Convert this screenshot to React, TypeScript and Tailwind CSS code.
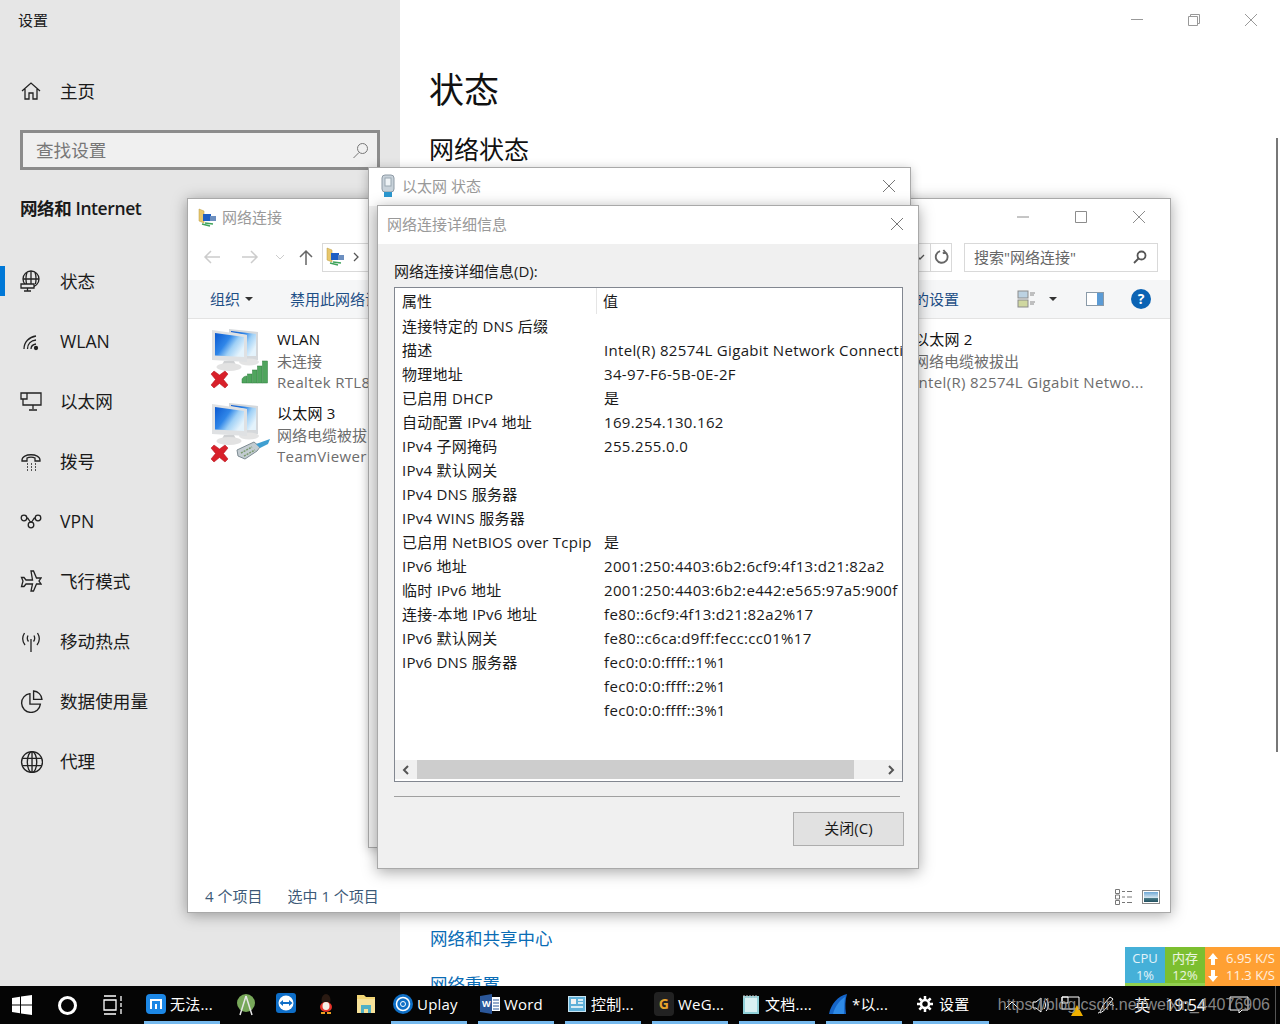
import { ReactNode } from "react"

const rows: [string, string][] = [
    ["连接特定的 DNS 后缀", ""],
    ["描述", "Intel(R) 82574L Gigabit Network Connection"],
    ["物理地址", "34-97-F6-5B-0E-2F"],
    ["已启用 DHCP", "是"],
    ["自动配置 IPv4 地址", "169.254.130.162"],
    ["IPv4 子网掩码", "255.255.0.0"],
    ["IPv4 默认网关", ""],
    ["IPv4 DNS 服务器", ""],
    ["IPv4 WINS 服务器", ""],
    ["已启用 NetBIOS over Tcpip", "是"],
    ["IPv6 地址", "2001:250:4403:6b2:6cf9:4f13:d21:82a2"],
    ["临时 IPv6 地址", "2001:250:4403:6b2:e442:e565:97a5:900f"],
    ["连接-本地 IPv6 地址", "fe80::6cf9:4f13:d21:82a2%17"],
    ["IPv6 默认网关", "fe80::c6ca:d9ff:fecc:cc01%17"],
    ["IPv6 DNS 服务器", "fec0:0:0:ffff::1%1"],
    ["", "fec0:0:0:ffff::2%1"],
    ["", "fec0:0:0:ffff::3%1"],
]

function Svg({ children, size = 22 }: { children: ReactNode; size?: number }) {
    return <svg width={size} height={size} viewBox="0 0 22 22" fill="none" stroke="#222" strokeWidth="1.3" className="shrink-0">{children}</svg>
}

const navItems: { label: string; icon: ReactNode }[] = [
    { label: "状态", icon: <Svg><circle cx="11" cy="9" r="8" /><path d="M3 9h16M11 1v13M7 2.500C6 5 6 11 6.500 14M15 2.500c1 2.500 1 8.500.5 11.500" /><path d="M1 14h13v4H1zM7.500 18v3M4 21h7" fill="#e6e6e6" /></Svg> },
    { label: "WLAN", icon: <Svg><path d="M4 19c0-7 5-12 12-13M7.500 19c0-5 3.500-8.500 8.500-9M11 19c0-2.500 2-4.500 5-5" /><circle cx="16" cy="18" r="1.500" fill="#222" /></Svg> },
    { label: "以太网", icon: <Svg><path d="M7 3h14v12H7M1 3h6v6H1zM3 9v6h4M13 15v4M9 20h8" /></Svg> },
    { label: "拨号", icon: <Svg><path d="M2 10c0-7 18-7 18 0v1h-5V8c-2-1-6-1-8 0v3H2z" /><path d="M7 14h1M11 14h1M15 14h1M7 17h1M11 17h1M15 17h1M7 20h1M11 20h1M15 20h1" /></Svg> },
    { label: "VPN", icon: <Svg><circle cx="4" cy="8" r="2.800" /><circle cx="18" cy="8" r="2.800" /><circle cx="11" cy="15" r="2.800" /><path d="M7 8c2 0 2 4 4 4s2-4 4-4" /></Svg> },
    { label: "飞行模式", icon: <Svg><path d="M11 1h2.500l3 7H21l-2 3 2 3h-4.500l-3 7H11l1.500-7H6l-2 2.500H1.500L3 11 1.500 7.500H4L6 10h6.500z" /></Svg> },
    { label: "移动热点", icon: <Svg><path d="M11 9v13M4.500 3C2 7 2 11 5 15M17.500 3c2.500 4 2.500 8-.5 12M8 5.500c-1 2-1 4 .5 6M14 5.500c1 2 1 4-.5 6" /></Svg> },
    { label: "数据使用量", icon: <Svg size={23}><path d="M9.500 3.500a9 9 0 1 0 10 10h-10z" /><path d="M13 1a8.500 8.500 0 0 1 8 8h-8z" /></Svg> },
    { label: "代理", icon: <Svg size={23}><circle cx="11.500" cy="11.500" r="10" /><ellipse cx="11.500" cy="11.500" rx="4.500" ry="10" /><path d="M2 8h19M2 15h19M11.500 1.500v20" /></Svg> },
]

function Sidebar() {
    return <div className="w-[400px] shrink-0 bg-[#e6e6e6] text-[#1a1a1a]">
        <div className="pl-[18px] pt-[10px] text-[15px] leading-[21px]">设置</div>
        <div className="flex items-center pl-5 mt-[44px] h-8 text-[17.6px]">
            <Svg><path d="M2 11 11 3l9 8M5 9v10h4v-6h4v6h4V9" /></Svg>
            <span className="ml-[18px]">主页</span>
        </div>
        <div className="mx-5 mt-[23px] h-10 border-[3px] border-[#8c8c8c] bg-[#f0f0f0] flex items-center justify-between pl-[13px] pr-2 text-[17.6px] text-[#777]">
            <span>查找设置</span>
            <svg width="17" height="17" viewBox="0 0 17 17" fill="none" stroke="#777"><circle cx="10.500" cy="6.500" r="5" /><path d="M7 10.500 1.500 16" /></svg>
        </div>
        <div className="pl-5 mt-[26px] text-[17.500px] leading-6 font-semibold tracking-[-0.4px]">网络和 Internet</div>
        <div className="mt-[31px]">
            {navItems.map((n, i) => (
                <div key={n.label} className="relative flex items-center h-[60px] pl-5">
                    {i === 0 && <div className="absolute left-0 top-[15px] w-[5px] h-[30px] bg-[#0078d7]" />}
                    <div className="w-[40px]">{n.icon}</div>
                    <span className="text-[17.6px]">{n.label}</span>
                </div>
            ))}
        </div>
    </div>
}

function MainPanel() {
    return <div className="relative flex-1 bg-white overflow-hidden pl-[30px]">
        <div className="absolute right-px top-0 flex text-[#999]">
            <div className="w-[57px] h-10 flex items-center justify-center"><svg width="12" height="12" stroke="currentColor"><path d="M0 5.500h12" /></svg></div>
            <div className="w-[57px] h-10 flex items-center justify-center"><svg width="12" height="12" fill="none" stroke="currentColor"><path d="M.5 2.500h9v9h-9zM2.500 2.500v-2h9v9h-2" /></svg></div>
            <div className="w-[57px] h-10 flex items-center justify-center"><svg width="12" height="12" stroke="currentColor"><path d="m0 0 12 12M12 0 0 12" /></svg></div>
        </div>
        <div className="absolute right-[2px] top-[138px] w-[2px] h-[614px] bg-[#777]" />
        <div className="pt-[66px] -ml-px text-[35px] leading-[48px] text-[#111]">状态</div>
        <div className="mt-[17px] text-[25px] leading-9 -ml-px text-[#111]">网络状态</div>
        <div className="mt-[757px] text-[17.5px] leading-7 text-[#0a6cb5]">网络和共享中心</div>
        <div className="mt-[18px] text-[17.5px] leading-7 text-[#0a6cb5]">网络重置</div>
    </div>
}

function NetIcon({ ethernet }: { ethernet?: boolean }) {
    return <svg width="62" height="62" viewBox="0 0 62 62" className="shrink-0">
        <defs>
            <linearGradient id="scr" x1="0" y1="0" x2="1" y2="0.6">
                <stop offset="0" stopColor="#0a58d0" />
                <stop offset="0.45" stopColor="#2f86e8" />
                <stop offset="0.7" stopColor="#9fd0f6" />
                <stop offset="1" stopColor="#e4f3fc" />
            </linearGradient>
        </defs>
        <path d="M19 0 48 3V31H36V6L19 4z" fill="#d5d8db" />
        <path d="M21 2 46 5V27H37V6L21 3z" fill="url(#scr)" />
        <ellipse cx="39" cy="33" rx="10" ry="3.500" fill="#e4e4e4" />
        <path d="M2 1 37 6V33L2 31z" fill="#dfe1e3" />
        <path d="M5 4 34 8V28L5 26.500z" fill="url(#scr)" />
        <path d="M14 32h10l2 4H12z" fill="#cfd1d3" />
        <ellipse cx="19" cy="38" rx="12.500" ry="4" fill="#e2e2e2" />
        <path d="M1 45 4 42l5.500 4L15 42l3 3-4.500 5.500L18 56l-3 3-5.500-4.500L4 59l-3-3 4.500-5.500z" fill="#d8202a" stroke="#b01018" strokeWidth="0.5" />
        {ethernet
            ? <g>
                <path d="M27 47 44 39l6 5-3 4-12 8-7-3z" fill="#c3ccd1" stroke="#7d8b92" />
                <path d="M31 50l11-6M34 53l11-6" stroke="#7b9a6f" strokeWidth="1.500" strokeDasharray="2 1" />
                <path d="M46 41 60 36l-2 5-8 4z" fill="#3f9fd1" />
            </g>
            : <g fill="#4fa55d" stroke="#2f7d3e" strokeWidth="0.5">
                <path d="M32 50c1-2 3-3 5-3v7h-5z" />
                <rect x="37.500" y="45" width="4.500" height="9" />
                <rect x="42.500" y="41" width="4.500" height="13" />
                <rect x="47.500" y="37" width="4.500" height="17" />
                <rect x="52.500" y="32" width="5" height="22" />
            </g>}
    </svg>
}

function ConnItem({ title, status, device, ethernet }: { title: string; status: string; device: string; ethernet?: boolean }) {
    return <div className="flex h-[74px] gap-[5px] overflow-hidden">
        <NetIcon ethernet={ethernet} />
        <div className="text-[15px] leading-[21px] whitespace-nowrap text-[#6d6d6d]">
            <div className="text-[#111] tracking-[0.2px]">{title}</div>
            <div className="mt-px">{status}</div>
            <div className="tracking-[0.35px]">{device}</div>
        </div>
    </div>
}

function NetworkWindow() {
    return <div className="absolute left-[187px] top-[198px] w-[984px] h-[715px] bg-white border border-[#a9a9a9] shadow-[0_2px_14px_rgba(0,0,0,0.35)] flex flex-col text-[#333]">
        <div className="h-[39px] shrink-0 flex items-center pl-[10px] pb-[2px]">
            <FolderNet />
            <span className="ml-[4px] text-[15px] text-[#999]">网络连接</span>
            <div className="ml-auto mr-[2px] -mt-[2px] flex text-[#8c8c8c]">
                <div className="w-[58px] flex justify-center"><svg width="14" height="14" stroke="currentColor"><path d="M1 7h12" /></svg></div>
                <div className="w-[58px] flex justify-center"><svg width="14" height="14" fill="none" stroke="currentColor"><path d="M1.500 1.500h11v11h-11z" /></svg></div>
                <div className="w-[58px] flex justify-center"><svg width="14" height="14" stroke="currentColor"><path d="m1 1 12 12M13 1 1 13" /></svg></div>
            </div>
        </div>
        <div className="h-[30px] shrink-0 mt-[4px] flex items-center pl-[15px] pr-[12px]">
            <svg width="18" height="14" fill="none" stroke="#ccc" strokeWidth="1.500"><path d="M17 7H2M8 1 2 7l6 6" /></svg>
            <svg width="18" height="14" fill="none" stroke="#ccc" strokeWidth="1.500" className="ml-[20px]"><path d="M1 7h15M10 1l6 6-6 6" /></svg>
            <svg width="10" height="6" fill="none" stroke="#ccc" className="ml-[16px]"><path d="m1 1 4 4 4-4" /></svg>
            <svg width="14" height="16" fill="none" stroke="#666" strokeWidth="1.500" className="ml-[14px]"><path d="M7 16V2M1 8l6-6 6 6" /></svg>
            <div className="ml-[9px] flex-1 h-[29px] border border-[#d9d9d9] flex items-center pl-[3px] pr-[5px]">
                <FolderNet />
                <svg width="8" height="10" fill="none" stroke="#555" strokeWidth="1.300" className="ml-[6px]"><path d="m2 1 4 4-4 4" /></svg>
                <svg width="10" height="6" fill="none" stroke="#555" strokeWidth="1.300" className="ml-auto"><path d="m1 1 4 4 4-4" /></svg>
            </div>
            <div className="h-[29px] w-[21px] border border-l-0 border-[#d9d9d9] flex items-center justify-center">
                <svg width="15" height="16" viewBox="0 0 16 16" fill="none" stroke="#666" strokeWidth="2"><path d="M11.500 2.500a6.300 6.300 0 1 1-5-.7M10 0.500l1.800 2.200-2.400 1.500" /></svg>
            </div>
            <div className="ml-[12px] w-[194px] h-[29px] border border-[#d9d9d9] flex items-center justify-between pl-[9px] pr-[10px] text-[15px] text-[#666]">
                <span>搜索"网络连接"</span>
                <svg width="14" height="14" viewBox="0 0 14 14" fill="none" stroke="#555" strokeWidth="1.800"><circle cx="8.500" cy="5.500" r="4" /><path d="M5.500 8.500 1 13" /></svg>
            </div>
        </div>
        <div className="h-[39px] shrink-0 mt-[8px] bg-[#f5f6f7] border-b border-[#e3e3e3] flex items-center justify-between pl-[22px] pr-[19px] text-[15px] text-[#1e4f86]">
            <div className="flex items-center whitespace-nowrap">
                <span>组织</span>
                <svg width="8" height="4" className="ml-[5px]"><path d="M0 0h8L4 4z" fill="#333" /></svg>
                <span className="ml-[37px]">禁用此网络设备</span>
            </div>
            <div className="flex items-center">
                <span>更改此连接的设置</span>
                <svg width="20" height="20" viewBox="0 0 20 20" className="ml-[58px]"><rect x="1" y="2" width="10" height="7" fill="#bcd2e2" stroke="#8b8b8b" /><rect x="1" y="11" width="10" height="7" fill="#cfd7a0" stroke="#8b8b8b" /><path d="M13 4h5M13 6h4M13 13h5M13 15h4" stroke="#888" /></svg>
                <svg width="8" height="4" className="ml-[12px]"><path d="M0 0h8L4 4z" fill="#333" /></svg>
                <svg width="18" height="14" className="ml-[29px]"><rect x=".5" y=".5" width="17" height="13" fill="#fff" stroke="#8a9aa8" /><rect x="11" y="1" width="6" height="12" fill="#5b9bd5" /></svg>
                <div className="ml-[27px] w-5 h-5 rounded-full bg-[#0b63b4] flex items-center justify-center text-white text-sm font-bold">?</div>
            </div>
        </div>
        <div className="flex-1 grid grid-cols-[637px_1fr] pl-[22px] pt-[10px] content-start">
            <div>
                <ConnItem title="WLAN" status="未连接" device="Realtek RTL8821CE Wireless LAN" />
                <ConnItem title="以太网 3" status="网络电缆被拔出" device="TeamViewer VPN Adapter" ethernet />
            </div>
            <ConnItem title="以太网 2" status="网络电缆被拔出" device="Intel(R) 82574L Gigabit Netwo..." ethernet />
        </div>
        <div className="h-[27px] mb-[2px] shrink-0 flex items-center pl-[17px] pr-[10px] text-[15px] text-[#3d5a78]">
            <span>4 个项目</span>
            <span className="ml-[25px]">选中 1 个项目</span>
            <svg width="20" height="18" className="ml-auto" fill="none" stroke="#777"><path d="M1.500 1.500h4v4h-4zM1.500 7h4v4h-4zM1.500 12.500h4v4h-4zM8 3.500h3M13 3.500h5M8 9h3M13 9h5M8 14.500h3M13 14.500h5" /></svg>
            <svg width="18" height="14" className="ml-[8px]">
                <defs><linearGradient id="pic" x1="0" y1="0" x2="0" y2="1"><stop offset="0" stopColor="#6fa8d6" /><stop offset="0.55" stopColor="#cfe2ee" /><stop offset="0.6" stopColor="#4e7f8c" /><stop offset="1" stopColor="#22505f" /></linearGradient></defs>
                <rect x=".5" y=".5" width="17" height="13" fill="#fff" stroke="#888" /><rect x="2" y="2" width="14" height="10" fill="url(#pic)" />
            </svg>
        </div>
    </div>
}

function FolderNet() {
    return <svg width="20" height="20" viewBox="0 0 20 20" className="shrink-0">
        <path d="M1 1l5 2v12L1 13z" fill="#e8c76d" stroke="#b99a3e" strokeWidth="0.5" />
        <rect x="5" y="6" width="8" height="7" fill="#1f5fc4" />
        <rect x="12" y="8" width="6" height="5" fill="#6c8fc0" />
        <path d="M4 16l8 2M7 15l8 1" stroke="#3fa45b" strokeWidth="1.500" />
    </svg>
}

function CloseX() {
    return <svg width="14" height="14" stroke="#777"><path d="m1 1 12 12M13 1 1 13" /></svg>
}

function StatusWindow() {
    return <div className="absolute left-[368px] top-[167px] w-[543px] h-[681px] bg-[#f0f0f0] border border-[#a9a9a9] shadow-[0_2px_10px_rgba(0,0,0,0.25)]">
        <div className="h-[38px] bg-white flex items-center pl-[11px] pr-[14px] pb-[2px]">
            <svg width="16" height="24" viewBox="0 0 16 24"><rect x="2" y="1" width="12" height="17" rx="3" fill="#c8d2da" stroke="#8d9aa5" /><rect x="5" y="4" width="6" height="8" fill="#eef3f6" stroke="#9aa8b2" /><rect x="4" y="18" width="8" height="5" fill="#2b97cf" /></svg>
            <span className="ml-[6px] text-[15px] text-[#999]">以太网 状态</span>
            <div className="ml-auto"><CloseX /></div>
        </div>
    </div>
}

function DetailsDialog() {
    return <div className="absolute left-[377px] top-[205px] w-[542px] h-[664px] bg-[#f0f0f0] border border-[#a9a9a9] shadow-[0_3px_14px_rgba(0,0,0,0.35)] flex flex-col text-[15px] text-[#1a1a1a]">
        <div className="h-[38px] shrink-0 bg-white flex items-center justify-between pl-[9px] pr-[14px] pb-[2px] text-[#999]">
            <span>网络连接详细信息</span>
            <CloseX />
        </div>
        <div className="pl-4 pt-[16px] leading-[22px]">网络连接详细信息(D):</div>
        <div className="ml-4 mt-[5px] w-[509px] h-[495px] shrink-0 bg-white border border-[#828790] flex flex-col overflow-hidden">
            <div className="h-[26px] shrink-0 flex items-center">
                <span className="w-[202px] shrink-0 pl-[7px] border-r border-[#e5e5e5] leading-[26px]">属性</span>
                <span className="pl-[6px]">值</span>
            </div>
            <div className="flex-1 overflow-hidden">
                {rows.map((r, i) => (
                    <div key={i} className="grid grid-cols-[202px_1fr] h-6 items-center whitespace-nowrap">
                        <span className="pl-[7px] tracking-[0.25px]">{r[0]}</span>
                        <span className="pl-[7px] overflow-hidden tracking-[0.33px]">{r[1]}</span>
                    </div>
                ))}
            </div>
            <div className="h-[19px] mb-[2px] shrink-0 flex items-center bg-[#f0f0f0]">
                <div className="w-[22px] flex justify-center"><svg width="8" height="10" fill="none" stroke="#555" strokeWidth="2"><path d="M6 1 2 5l4 4" /></svg></div>
                <div className="w-[437px] h-[19px] bg-[#cdcdcd]" />
                <div className="flex-1 flex justify-end pr-[7px]"><svg width="8" height="10" fill="none" stroke="#555" strokeWidth="2"><path d="m2 1 4 4-4 4" /></svg></div>
            </div>
        </div>
        <div className="ml-4 mr-[18px] mt-[14px] border-t border-[#a0a0a0]" />
        <div className="flex justify-end pr-[14px] mt-[15px]">
            <div className="w-[111px] h-[34px] pb-[2px] bg-[#e1e1e1] border border-[#adadad] flex items-center justify-center">关闭(C)</div>
        </div>
    </div>
}

function Uplay() {
    return <svg width="20" height="20" viewBox="0 0 20 20"><circle cx="10" cy="10" r="10" fill="#0f6fc6" /><circle cx="10" cy="10" r="6.500" fill="none" stroke="#fff" strokeWidth="1.500" /><circle cx="10" cy="10" r="2.500" fill="none" stroke="#fff" /></svg>
}

function TaskItem({ icon, label }: { icon: ReactNode; label: string }) {
    return <div className="w-[76px] h-[38px] shrink-0 border-b-[3px] border-[#76b9ed] flex items-center pl-[2px] gap-1 text-white text-[15px] tracking-[0.2px] whitespace-nowrap">
        <span className="w-5 h-5 shrink-0 flex items-center justify-center">{icon}</span>
        <span className="mt-[2px]">{label}</span>
    </div>
}

function Taskbar() {
    return <div className="relative h-[38px] shrink-0 bg-[#050505] flex items-center">
        <div className="w-[44px] flex justify-center">
            <svg width="20" height="20" viewBox="0 0 20 20" fill="#fff"><path d="M0 3l8-1.200V9.500H0zM9 1.600 20 0v9.500H9zM0 10.500h8v7.700L0 17zM9 10.500h11V20L9 18.400z" /></svg>
        </div>
        <div className="w-[46px] flex justify-center"><div className="w-[19px] h-[19px] rounded-full border-[3px] border-white" /></div>
        <div className="w-[46px] flex justify-center">
            <svg width="20" height="20" fill="none" stroke="#fff" strokeWidth="1.300"><path d="M1 1h12M1 19h12M1 5h12v10H1zM18 1v5M18 8v4M18 14v5" /></svg>
        </div>
        <div className="ml-[8px]">
            <TaskItem label="无法..." icon={<div className="w-5 h-5 rounded-sm bg-[#1c87e5] flex items-center justify-center"><svg width="12" height="10" fill="none" stroke="#fff" strokeWidth="2"><path d="M1 10V1h10v9M6 5v5" /></svg></div>} />
        </div>
        <div className="ml-[6px] flex">
            <div className="w-10 flex justify-center">
                <svg width="18" height="24" viewBox="0 0 18 24"><circle cx="9" cy="10" r="9" fill="#78a85a" /><path d="M9 3 3 22M9 3l6 19" stroke="#e6e6e6" strokeWidth="1.500" /></svg>
            </div>
            <div className="w-10 flex justify-center">
                <svg width="20" height="20" viewBox="0 0 20 20"><rect width="20" height="20" rx="3" fill="#0e6ec8" /><circle cx="10" cy="10" r="7.500" fill="#fff" /><path d="M3.500 10 7 7v2h6V7l3.500 3-3.500 3v-2H7v2z" fill="#0e6ec8" /></svg>
            </div>
            <div className="w-10 flex justify-center">
                <svg width="16" height="22" viewBox="0 0 16 22"><ellipse cx="8" cy="7" rx="4.500" ry="6" fill="#2a1a12" /><ellipse cx="8" cy="14" rx="6" ry="5" fill="#e6332a" /><ellipse cx="8" cy="13" rx="3.500" ry="4" fill="#f6f0e6" /><path d="M3 20h4M9 20h4" stroke="#f0a020" strokeWidth="2" /></svg>
            </div>
            <div className="w-10 flex justify-center">
                <svg width="18" height="20" viewBox="0 0 18 20"><path d="M0 2h7l2 2h9v16H0z" fill="#f2d675" /><path d="M0 6h18v14H0z" fill="#f7e29a" /><path d="M4 20v-8h10v8h-3v-4H7v4z" fill="#4fb0c6" /></svg>
            </div>
        </div>
        <div className="ml-[5px] flex gap-[11px]">
            <TaskItem label="Uplay" icon={<Uplay />} />
            <TaskItem label="Word" icon={<svg width="20" height="20" viewBox="0 0 20 20"><path d="M0 2 12 0v20L0 18z" fill="#2b579a" /><path d="M12 3h8v14h-8z" fill="#fff" /><path d="M13 6h6M13 9h6M13 12h6M13 15h6" stroke="#2b579a" /><text x="2" y="13" fontSize="9" fill="#fff" fontWeight="700">W</text></svg>} />
            <TaskItem label="控制..." icon={<svg width="18" height="16" viewBox="0 0 18 16"><rect x=".5" y=".5" width="17" height="15" fill="#5fb0d8" stroke="#c8e4f2" /><rect x="3" y="3" width="5" height="5" fill="#f2f2f2" /><path d="M10 4h5M10 7h5M3 11h12" stroke="#fff" strokeWidth="1.500" /></svg>} />
            <TaskItem label="WeG..." icon={<div className="w-5 h-6 bg-[#222] rounded-sm flex items-center justify-center text-[#e8a42c] text-sm font-bold">G</div>} />
            <TaskItem label="文档...." icon={<svg width="18" height="20" viewBox="0 0 18 20"><path d="M1 2h16v18H1z" fill="#8fd0d8" /><path d="M3 4h12v14H3z" fill="#d8f0f2" /><path d="M2 1v3M5 1v3M8 1v3M11 1v3M14 1v3" stroke="#ccc" /></svg>} />
            <TaskItem label="*以..." icon={<svg width="20" height="22" viewBox="0 0 20 22"><path d="M1 21C3 11 10 3 19 1c-2 6-2 13-1 20z" fill="#1565c8" /><path d="M5 21C7 13 12 7 17 4c-1 5-1 11-1 17z" fill="#2e8ae6" /></svg>} />
            <TaskItem label="设置" icon={<svg width="16" height="16" viewBox="0 0 16 16" fill="none" stroke="#fff"><circle cx="8" cy="8" r="4" strokeWidth="2.500" /><path d="M8 0v3M8 13v3M0 8h3M13 8h3M2.300 2.300l2.200 2.200M11.500 11.500l2.200 2.200M13.700 2.300l-2.200 2.200M4.500 11.500l-2.200 2.200" strokeWidth="2.500" /></svg>} />
        </div>
        <div className="ml-auto flex items-center text-white pr-[4px]">
            <svg width="14" height="8" fill="none" stroke="#fff" className="mr-[13px]"><path d="m1 7 6-6 6 6" /></svg>
            <svg width="18" height="18" viewBox="0 0 18 18" fill="none" stroke="#fff" className="mr-[11px]"><path d="M1 6v6h3l5 4V2L4 6zM12 5c2 2 2 6 0 8M14 3c3 3 3 9 0 12" /></svg>
            <span className="relative mr-[15px]">
                <svg width="20" height="18" fill="none" stroke="#fff"><path d="M1 1h17v12H1zM1 1h6v6H1z" /></svg>
                <svg width="12" height="11" className="absolute -right-[2px] -bottom-[2px]"><path d="M6 0l6 11H0z" fill="#f0b000" /></svg>
            </span>
            <svg width="20" height="20" viewBox="0 0 20 20" fill="none" stroke="#fff" className="mr-[18px]"><path d="M2 18c3 0 3-5 6-9l6-7 3 2-6 8c-2 3-5 5-7 6M14 10c2-1 3 0 4 1" /></svg>
            <span className="text-base mr-[15px]">英</span>
            <span className="text-base mr-[23px]">19:54</span>
            <svg width="20" height="18" fill="none" stroke="#fff" className="mr-[26px]"><path d="M1 1h18v13h-6l-3 3v-3H1z" /></svg>
            <div className="w-px h-[38px] bg-[#555]" />
        </div>
        <div className="absolute right-[10px] top-[9px] text-base leading-5 text-[#9a9a9a] font-['Liberation_Sans',sans-serif] opacity-85 whitespace-nowrap">https://blog.csdn.net/weixin_44076906</div>
    </div>
}

function NetMeter() {
    return <div className="absolute right-0 bottom-[38px] h-[39px] w-[155px] flex text-[13px] leading-[17px] text-center text-white/85">
        <div className="w-10 pt-[3px] bg-[#45b0d8] border-b-[3px] border-[#92d050]"><div>CPU</div><div>1%</div></div>
        <div className="w-10 pt-[3px] bg-[#7cbf30] border-b-[3px] border-[#92d050]"><div>内存</div><div>12%</div></div>
        <div className="flex-1 pt-[3px] bg-[#ffa033] pl-[3px] pr-[5px]">
            <div className="flex justify-between items-center">
                <svg width="10" height="12" fill="#fff"><path d="M5 0l5 6H7v6H3V6H0z" /></svg>
                <span>6.95 K/S</span>
            </div>
            <div className="flex justify-between items-center">
                <svg width="10" height="12" fill="#fff"><path d="M5 12l5-6H7V0H3v6H0z" /></svg>
                <span>11.3 K/S</span>
            </div>
        </div>
    </div>
}

export default function App() {
    return <div className="relative w-[1280px] h-[1024px] overflow-hidden flex flex-col font-['Open_Sans','Noto_Sans_CJK_SC',sans-serif]">
        <div className="flex flex-1 min-h-0">
            <Sidebar />
            <MainPanel />
        </div>
        <Taskbar />
        <NetworkWindow />
        <StatusWindow />
        <DetailsDialog />
        <NetMeter />
    </div>
}
